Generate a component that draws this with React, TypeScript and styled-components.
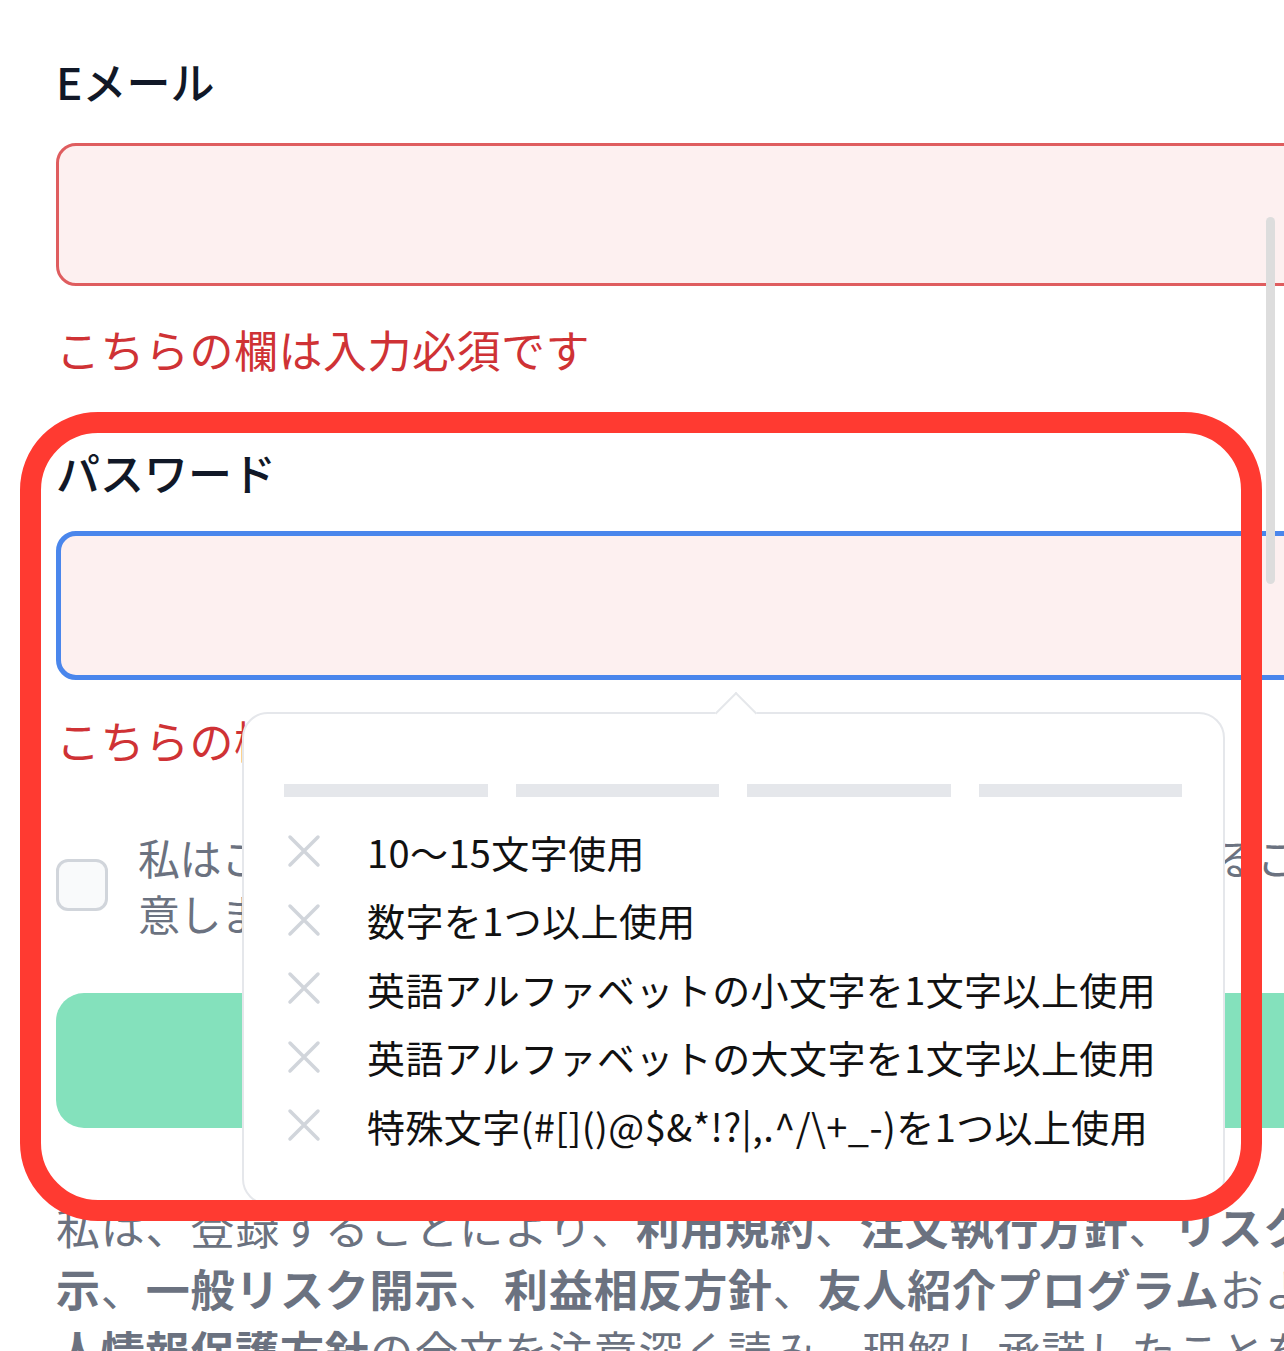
import React from "react";
import styled, { createGlobalStyle } from "styled-components";

const GlobalStyle = createGlobalStyle`
  html, body {
    margin: 0;
    padding: 0;
    width: 1284px;
    height: 1351px;
    overflow: hidden;
    background: #ffffff;
  }
  body {
    font-family: "Noto Sans CJK JP", "Noto Sans", sans-serif;
  }
`;

const Page = styled.div`
  position: relative;
  width: 1380px;
  box-sizing: border-box;
  padding: 48px 0 0 56px;
  display: flex;
  flex-direction: column;

  & > * {
    flex-shrink: 0;
  }
`;

const Field = styled.div<{ $top?: number }>`
  display: flex;
  flex-direction: column;
  margin-top: ${(p) => p.$top ?? 0}px;
`;

const Label = styled.div`
  font-size: 44px;
  line-height: 66px;
  font-weight: 500;
  color: #111827;
`;

const InputWrap = styled.div<{ $top: number }>`
  position: relative;
  margin-top: ${(p) => p.$top}px;
`;

const Input = styled.div<{ $focused?: boolean }>`
  box-sizing: border-box;
  height: ${(p) => (p.$focused ? 149 : 143)}px;
  border-radius: 20px;
  background: #fdf0f0;
  border: ${(p) => (p.$focused ? "5px solid #4a86ec" : "3px solid #df5d5f")};
`;

const ErrorText = styled.div<{ $top: number }>`
  margin-top: ${(p) => p.$top}px;
  font-size: 44px;
  line-height: 66px;
  letter-spacing: 0.5px;
  color: #cf3235;
  font-weight: 400;
  white-space: nowrap;
`;

const CheckRow = styled.div`
  margin-top: 56px;
  display: flex;
  align-items: center;
  gap: 30px;
`;

const Checkbox = styled.div`
  box-sizing: border-box;
  width: 52px;
  height: 52px;
  flex: none;
  border: 3px solid #d1d5db;
  border-radius: 12px;
  background: #f9fafb;
`;

const CheckText = styled.div`
  font-size: 42px;
  line-height: 56px;
  letter-spacing: -0.5px;
  color: #6b7280;
  white-space: nowrap;
`;

const SubmitButton = styled.div`
  margin-top: 52px;
  height: 135px;
  border-radius: 28px;
  background: #84e1bc;
`;

const Legal = styled.p`
  margin: 67px 0 0;
  font-size: 44px;
  line-height: 62px;
  letter-spacing: 0.8px;
  color: #6b7280;
  white-space: nowrap;

  b {
    font-weight: 700;
  }
`;

const Popover = styled.div`
  position: absolute;
  top: calc(100% + 32px);
  left: 186px;
  width: 983px;
  height: 493px;
  box-sizing: border-box;
  padding: 70px 41px 0 40px;
  background: #ffffff;
  border: 2px solid #e5e7eb;
  border-radius: 26px;
  z-index: 5;

  &::before {
    content: "";
    position: absolute;
    top: -16px;
    left: 477px;
    width: 28px;
    height: 28px;
    background: #ffffff;
    border-top: 2px solid #e5e7eb;
    border-left: 2px solid #e5e7eb;
    transform: rotate(45deg);
  }
`;

const Strength = styled.div`
  display: grid;
  grid-template-columns: repeat(4, 1fr);
  gap: 28px;
`;

const StrengthBar = styled.div`
  height: 13px;
  background: #e5e7eb;
`;

const Rules = styled.ul`
  list-style: none;
  margin: 20px 0 0;
  padding: 0;
`;

const Rule = styled.li`
  height: 68.5px;
  display: flex;
  align-items: center;
  gap: 46px;
  padding-left: 3px;
  font-size: 38px;
  letter-spacing: 0.4px;
  color: #111111;
  white-space: nowrap;
`;

const Scrollbar = styled.div`
  position: absolute;
  left: 1266px;
  top: 217px;
  width: 9px;
  height: 367px;
  border-radius: 5px;
  background: #dddddd;
  z-index: 6;
`;

const Highlight = styled.div`
  position: absolute;
  left: 20px;
  top: 412px;
  width: 1242px;
  height: 809px;
  box-sizing: border-box;
  border: 21px solid #ff3a31;
  border-radius: 78px;
  z-index: 10;
  pointer-events: none;
`;

const Cross = () => (
  <svg width="34" height="34" viewBox="0 0 34 34" style={{ flex: "none" }}>
    <path d="M3 3 L31 31 M31 3 L3 31" stroke="#d1d5db" strokeWidth="3.5" strokeLinecap="round" />
  </svg>
);

const rules = [
  "10〜15文字使用",
  "数字を1つ以上使用",
  "英語アルファベットの小文字を1文字以上使用",
  "英語アルファベットの大文字を1文字以上使用",
  "特殊文字(#[]()@$&*!?|,.^/\\+_-)を1つ以上使用",
];

export default function App() {
  return (
    <>
      <GlobalStyle />
      <Page>
        <Field>
          <Label>Eメール</Label>
          <InputWrap $top={29}>
            <Input />
          </InputWrap>
        </Field>
        <ErrorText $top={30}>こちらの欄は入力必須です</ErrorText>

        <Field $top={57}>
          <Label>パスワード</Label>
          <InputWrap $top={26}>
            <Input $focused />
            <Popover>
              <Strength>
                {[0, 1, 2, 3].map((i) => (
                  <StrengthBar key={i} />
                ))}
              </Strength>
              <Rules>
                {rules.map((r) => (
                  <Rule key={r}>
                    <Cross />
                    <span>{r}</span>
                  </Rule>
                ))}
              </Rules>
            </Popover>
          </InputWrap>
        </Field>
        <ErrorText $top={27}>こちらの欄は入力必須です</ErrorText>

        <CheckRow>
          <Checkbox />
          <CheckText>
            私はこの登録内容が正確であり、自身の責任で常に管理することに同
            <br />
            意します。
          </CheckText>
        </CheckRow>

        <SubmitButton />

        <Legal>
          私は、登録することにより、<b>利用規約</b>、<b>注文執行方針</b>、<b>リスク開</b>
          <br />
          <b>示</b>、<b>一般リスク開示</b>、<b>利益相反方針</b>、<b>友人紹介プログラム</b>および<b>個</b>
          <br />
          <b>人情報保護方針</b>の全文を注意深く読み、理解し承諾したことを確認します。
        </Legal>

        <Scrollbar />
        <Highlight />
      </Page>
    </>
  );
}
